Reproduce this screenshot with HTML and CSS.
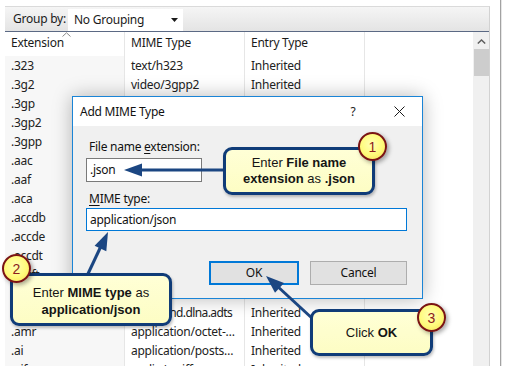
FILE: index.html
```html
<!DOCTYPE html>
<html>
<head>
<meta charset="utf-8">
<title>Add MIME Type</title>
<link rel="stylesheet" href="styles.css">
</head>
<body>
<div class="screen">
  <div class="panel">
    <div class="toolbar">
      <span class="tb-label">Group by:</span>
      <div class="combo">
        <span class="combo-text">No Grouping</span>
        <svg class="combo-arrow" width="7" height="4" viewBox="0 0 7 4"><path d="M0 0H7L3.5 4Z" fill="#1a1a1a"/></svg>
      </div>
    </div>
    <div class="listarea">
      <div class="list">
        <div class="cell h hc1">Extension<svg class="sort" width="9" height="5" viewBox="0 0 9 5"><path d="M0.5 4.5L4.5 0.8L8.5 4.5" fill="none" stroke="#8a8a8a" stroke-width="1"/></svg></div>
        <div class="cell h">MIME Type</div>
        <div class="cell h">Entry Type</div>
        <div class="cell h last"></div>

        <div class="cell c1">.323</div><div class="cell">text/h323</div><div class="cell">Inherited</div><div class="cell last"></div>
        <div class="cell c1">.3g2</div><div class="cell">video/3gpp2</div><div class="cell">Inherited</div><div class="cell last"></div>
        <div class="cell c1">.3gp</div><div class="cell">video/3gpp</div><div class="cell">Inherited</div><div class="cell last"></div>
        <div class="cell c1">.3gp2</div><div class="cell">video/3gpp2</div><div class="cell">Inherited</div><div class="cell last"></div>
        <div class="cell c1">.3gpp</div><div class="cell">video/3gpp</div><div class="cell">Inherited</div><div class="cell last"></div>
        <div class="cell c1">.aac</div><div class="cell">audio/aac</div><div class="cell">Inherited</div><div class="cell last"></div>
        <div class="cell c1">.aaf</div><div class="cell">application/octet-stream</div><div class="cell">Inherited</div><div class="cell last"></div>
        <div class="cell c1">.aca</div><div class="cell">application/octet-stream</div><div class="cell">Inherited</div><div class="cell last"></div>
        <div class="cell c1">.accdb</div><div class="cell">application/msaccess</div><div class="cell">Inherited</div><div class="cell last"></div>
        <div class="cell c1">.accde</div><div class="cell">application/msaccess</div><div class="cell">Inherited</div><div class="cell last"></div>
        <div class="cell c1">.accdt</div><div class="cell">application/msaccess</div><div class="cell">Inherited</div><div class="cell last"></div>
        <div class="cell c1">.accft</div><div class="cell">application/msaccess</div><div class="cell">Inherited</div><div class="cell last"></div>
        <div class="cell c1">.acx</div><div class="cell">application/internet</div><div class="cell">Inherited</div><div class="cell last"></div>
        <div class="cell c1">.adts</div><div class="cell tight">audio/vnd.dlna.adts</div><div class="cell">Inherited</div><div class="cell last"></div>
        <div class="cell c1">.amr</div><div class="cell">application/octet-stream</div><div class="cell">Inherited</div><div class="cell last"></div>
        <div class="cell c1">.ai</div><div class="cell">application/postscript</div><div class="cell">Inherited</div><div class="cell last"></div>
        <div class="cell c1">.aif</div><div class="cell">audio/x-aiff</div><div class="cell">Inherited</div><div class="cell last"></div>
      </div>
      <div class="vscroll">
        <svg class="vs-up" width="9" height="5" viewBox="0 0 9 5"><path d="M0.8 4.5L4.5 1L8.2 4.5" fill="none" stroke="#606060" stroke-width="1.5"/></svg>
        <div class="vs-thumb"></div>
      </div>
    </div>
  </div>
  <div class="edge"></div>
</div>

<div class="dialog">
  <div class="titlebar">
    <span class="title">Add MIME Type</span>
    <span class="tbtn help">?</span>
    <span class="tbtn close"><svg width="11" height="11" viewBox="0 0 11 11"><path d="M0.5 0.5L10.5 10.5M10.5 0.5L0.5 10.5" stroke="#1a1a1a" stroke-width="1"/></svg></span>
  </div>
  <div class="dbody">
    <div class="lbl">File name <u>e</u>xtension:</div>
    <div class="tbox tb1">.json</div>
    <div class="lbl lbl2"><u>M</u>IME type:</div>
    <div class="tbox tb2">application/json</div>
    <div class="btns">
      <div class="btn ok">OK</div>
      <div class="btn">Cancel</div>
    </div>
  </div>
</div>

<svg class="arrows" width="506" height="366" viewBox="0 0 506 366">
  <g fill="#1b4682" stroke="#1b4682">
    <line x1="226" y1="170" x2="138" y2="170" stroke-width="3"/>
    <polygon points="124,170 142,163.5 142,176.5" stroke="none"/>
    <line x1="86" y1="278" x2="102" y2="244" stroke-width="3"/>
    <polygon points="108,232 106.3,251.3 94.6,245.8" stroke="none"/>
    <line x1="314" y1="320" x2="276" y2="285" stroke-width="3"/>
    <polygon points="266,276 284,283 275,292.8" stroke="none"/>
  </g>
</svg>

<div class="callout co1"><span class="co-text">Enter <b>File name</b><br><b>extension</b> as <b>.json</b></span></div>
<div class="callout co2"><span class="co-text">Enter <b>MIME type</b> as<br><b>application/json</b></span></div>
<div class="callout co3"><span class="co-text">Click <b>OK</b></span></div>

<div class="badge b1">1</div>
<div class="badge b2">2</div>
<div class="badge b3">3</div>
</body>
</html>
```

FILE: styles.css
```css
* { box-sizing: border-box; }
html, body { margin: 0; padding: 0; }
body {
  width: 506px;
  height: 366px;
  overflow: hidden;
  position: relative;
  background: #ffffff;
  font-family: "Noto Sans", "Segoe UI", sans-serif;
  font-size: 12px;
  letter-spacing: -0.25px;
  color: #1e1e1e;
}

.screen {
  display: flex;
  height: 366px;
  padding-left: 5px;
}

.panel {
  width: 485px;
  margin-top: 6px;
  border-top: 1px solid #dadada;
  border-right: 1px solid #d2d2d2;
  display: flex;
  flex-direction: column;
  overflow: hidden;
}

.toolbar {
  height: 25px;
  flex: none;
  display: flex;
  align-items: stretch;
  padding: 2px 0 0 8px;
  background: linear-gradient(#f5f5f5, #e4e4e4);
  border-bottom: 1px solid #5b6984;
}
.tb-label {
  width: 55px;
  white-space: nowrap;
  line-height: 24px;
  margin-top: -2px;
  color: #1a1a1a;
}
.combo {
  width: 115px;
  background: #ffffff;
  display: flex;
  align-items: center;
  justify-content: space-between;
  padding: 0 5px 0 6px;
}
.combo-text { line-height: 20px; color: #1a1a1a; white-space: nowrap; }

.listarea {
  display: flex;
  flex: 1;
  min-height: 0;
}
.list {
  width: 468px;
  display: grid;
  grid-template-columns: 120px 120px 120px 108px;
  grid-template-rows: 24px;
  grid-auto-rows: 19px;
  align-content: start;
}
.cell {
  padding: 0 6px;
  line-height: 19px;
  white-space: nowrap;
  overflow: hidden;
  text-overflow: ellipsis;
  border-right: 1px solid #e6e6e6;
  color: #222222;
}
.cell.tight { letter-spacing: -0.6px; padding-right: 2px; }
.cell.last { border-right: none; }
.cell.h { line-height: 22px; color: #1a1a1a; }
.hc1 { position: relative; }
.sort { position: absolute; left: 57px; top: 0; }
.c1 { background: #f7f7f7; }

.vscroll {
  width: 16px;
  background: #f0f0f0;
  display: flex;
  flex-direction: column;
  align-items: center;
}
.vs-up { margin-top: 7px; }
.vs-thumb {
  width: 15px;
  height: 27px;
  margin-top: 5px;
  background: #cdcdcd;
}

.edge {
  width: 2px;
  margin-left: 10px;
  border-left: 1px solid #a2a2a2;
  border-right: 1px solid #e6e6e6;
}

/* dialog */
.dialog {
  position: absolute;
  left: 72px;
  top: 96px;
  width: 351px;
  height: 203px;
  border: 1px solid #1a84d6;
  background: #f0f0f0;
  display: flex;
  flex-direction: column;
  box-shadow: 0 0 18px rgba(0, 0, 0, 0.28);
}
.titlebar {
  height: 29px;
  background: #ffffff;
  display: flex;
  align-items: center;
  flex: none;
}
.title { flex: 1; padding-left: 7px; color: #111111; }
.tbtn {
  width: 46px;
  display: flex;
  align-items: center;
  justify-content: center;
  color: #1a1a1a;
}
.dbody {
  flex: 1;
  padding: 13px 0 0 13px;
}
.lbl {
  line-height: 16px;
  padding-left: 3px;
  color: #111111;
}
.lbl u { text-decoration-thickness: 1px; text-underline-offset: 2px; }
.lbl2 { margin-top: 9px; }
.tbox {
  background: #ffffff;
  padding-left: 3px;
  color: #111111;
}
.tb1 {
  margin-top: 3px;
  width: 116px;
  height: 24px;
  line-height: 22px;
  border: 1px solid #7a7a7a;
}
.tb2 {
  margin-top: 1px;
  width: 321px;
  height: 23px;
  line-height: 21px;
  border: 1px solid #0078d7;
}
.btns {
  width: 321px;
  margin-top: 30px;
  display: flex;
  justify-content: flex-end;
  gap: 11px;
}
.btn {
  width: 97px;
  height: 24px;
  line-height: 22px;
  text-align: center;
  background: #e1e1e1;
  border: 1px solid #adadad;
  color: #111111;
}
.btn.ok {
  width: 90px;
  border: 2px solid #0078d7;
  line-height: 20px;
}

/* annotations */
.arrows {
  position: absolute;
  left: 0;
  top: 0;
}
.callout {
  position: absolute;
  display: flex;
  align-items: center;
  justify-content: center;
  text-align: center;
  font-family: "Liberation Sans", Arial, sans-serif;
  font-size: 13px;
  letter-spacing: 0;
  line-height: 16px;
  color: #151515;
  background: linear-gradient(#ffffd6, #fdfdc4);
  border: 3px solid #103c78;
  border-radius: 9px;
  box-shadow: 1px 2px 3px rgba(0, 0, 0, 0.25);
}
.co-text { display: block; }
.co1 { left: 223px; top: 147px; width: 152px; height: 48px; }
.co2 { left: 10px; top: 273px; width: 162px; height: 53px; line-height: 17px; padding-top: 2px; }
.co3 { left: 310px; top: 309px; width: 123px; height: 47px; }

.badge {
  position: absolute;
  width: 29px;
  height: 29px;
  border-radius: 50%;
  border: 2px solid #7a1414;
  background: radial-gradient(circle at 45% 40%, #ffffb4 0%, #fffb7a 55%, #f3dd55 100%);
  color: #8c1c1c;
  font-family: "Liberation Sans", Arial, sans-serif;
  font-size: 14px;
  letter-spacing: 0;
  display: flex;
  align-items: center;
  justify-content: center;
  box-shadow: 2px 2px 4px rgba(0, 0, 0, 0.35);
}
.b1 { left: 358px; top: 132px; }
.b2 { left: 2px; top: 254px; }
.b3 { left: 417px; top: 303px; }
```
